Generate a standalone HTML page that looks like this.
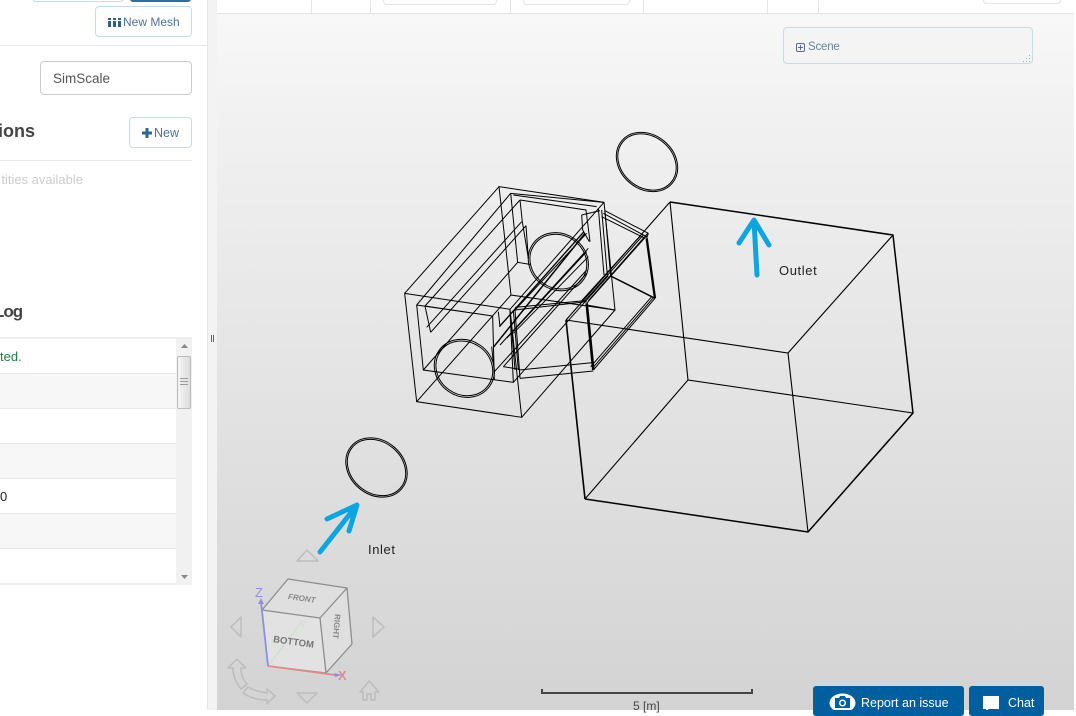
<!DOCTYPE html>
<html><head><meta charset="utf-8"><style>
html,body{margin:0;padding:0}
body{width:1076px;height:710px;overflow:hidden;position:relative;background:#fff;font-family:"Liberation Sans",sans-serif}
.a{position:absolute;box-sizing:border-box}
.btn{border:1px solid #c5dde8;border-radius:4px;color:#4f7399;font-size:13px;background:#fff;white-space:nowrap}
.t{position:absolute;white-space:nowrap}
</style></head><body>
<div class="a" style="left:217px;top:14px;width:857px;height:696px;background:linear-gradient(#f8f8f8,#f1f1f1 15%,#d3d3d3 100%)"></div>
<div class="a" style="left:207px;top:0;width:10px;height:710px;background:#f3f3f3;border-left:1px solid #e6e6e6"></div>
<div class="a" style="left:217px;top:13px;width:857px;height:1px;background:#e4e4e4"></div>
<div class="a" style="left:311px;top:0;width:1px;height:13px;background:#e4e4e4"></div>
<div class="a" style="left:370px;top:0;width:1px;height:13px;background:#e4e4e4"></div>
<div class="a" style="left:510px;top:0;width:1px;height:13px;background:#e4e4e4"></div>
<div class="a" style="left:643px;top:0;width:1px;height:13px;background:#e4e4e4"></div>
<div class="a" style="left:767px;top:0;width:1px;height:13px;background:#e4e4e4"></div>
<div class="a" style="left:818px;top:0;width:1px;height:13px;background:#e4e4e4"></div>
<div class="a" style="left:383px;top:-10px;width:114px;height:15px;border:1px solid #e4e4e4;border-radius:4px"></div>
<div class="a" style="left:523px;top:-10px;width:107px;height:15px;border:1px solid #e4e4e4;border-radius:4px"></div>
<div class="a" style="left:983px;top:-10px;width:78px;height:14px;border:1px solid #e4e4e4;border-radius:4px"></div>
<div class="a" style="left:211px;top:335px;width:1px;height:7px;background:#666"></div>
<div class="a" style="left:213px;top:335px;width:1px;height:7px;background:#666"></div>

<div class="a" style="left:32px;top:-10px;width:92px;height:12px;border:1px solid #c5dde8;border-radius:4px"></div>
<div class="a" style="left:130px;top:-10px;width:61px;height:12px;background:#2f6ea5;border-radius:3px"></div>
<div class="a btn" style="left:95px;top:6px;width:97px;height:31px"></div>
<svg class="a" style="left:108px;top:18px" width="13" height="9"><path d="M0 0h3v2H0zM5 0h3v2H5zM10 0h3v2h-3zM0 3h3v6H0zM5 3h3v6H5zM10 3h3v6h-3z" fill="#2f5f8f"/></svg>
<div class="t" style="left:123px;top:15px;font-size:12px;color:#4f7399">New Mesh</div>
<div class="a" style="left:0;top:45px;width:207px;height:1px;background:#e8e8e8"></div>
<div class="a" style="left:40px;top:61px;width:152px;height:34px;border:1px solid #ccc;border-radius:4px"></div>
<div class="t" style="left:53px;top:71px;font-size:13.500px;color:#555">SimScale</div>
<div class="t" style="left:-19px;top:121px;font-size:18px;font-weight:bold;color:#444;width:54px;text-align:right;direction:rtl">tions</div>
<div class="a btn" style="left:129px;top:117px;width:63px;height:31px"></div>
<svg class="a" style="left:142px;top:128px" width="10" height="10"><path d="M3.500 0h3v3.500H10v3H6.500V10h-3V6.500H0v-3h3.500z" fill="#2f6695"/></svg>
<div class="t" style="left:154px;top:126px;font-size:12.500px;color:#4f7399">New</div>
<div class="a" style="left:0;top:160px;width:192px;height:1px;background:#e8e8e8"></div>
<div class="t" style="left:0;top:172px;font-size:13px;color:#ccc;width:83px;overflow:hidden;direction:rtl">tities available</div>
<div class="t" style="left:-6px;top:302px;font-size:17px;font-weight:bold;letter-spacing:-1px;color:#444">Log</div>

<div class="a" style="left:0;top:337px;width:192px;height:248px;background:#fff;border-top:2px solid #eee;border-bottom:2px solid #eee"></div>
<div class="a" style="left:0;top:373px;width:176px;height:36px;background:#f8f7f7;border-top:1px solid #e9e9e9;border-bottom:1px solid #e9e9e9"></div>
<div class="a" style="left:0;top:443px;width:176px;height:36px;background:#f8f7f7;border-top:1px solid #e9e9e9;border-bottom:1px solid #e9e9e9"></div>
<div class="a" style="left:0;top:513px;width:176px;height:36px;background:#f8f7f7;border-top:1px solid #e9e9e9;border-bottom:1px solid #e9e9e9"></div>
<div class="t" style="left:0;top:349px;font-size:13px;color:#1e7f3c">ted.</div>
<div class="t" style="left:0;top:489px;font-size:13px;color:#222">0</div>
<div class="a" style="left:176px;top:339px;width:16px;height:246px;background:#f1f1f1"></div>
<div class="a" style="left:177px;top:356px;width:14px;height:53px;background:linear-gradient(90deg,#f4f4f4,#ddd);border:1px solid #bbb;border-radius:2px"></div>
<div class="a" style="left:180px;top:378px;width:8px;height:8px;background:repeating-linear-gradient(#999 0 1px,transparent 1px 3px)"></div>
<svg class="a" style="left:176px;top:340px" width="16" height="245"><path d="M5 8h7L8.500 4zM5 235h7l-3.500 4z" fill="#888"/></svg>

<div class="a" style="left:783px;top:27px;width:250px;height:37px;background:#f4f4f4;border:1px solid #c5dde8;border-radius:4px"></div>
<svg class="a" style="left:796px;top:43px" width="9" height="9"><rect x=".5" y=".5" width="8" height="8" rx="1.500" fill="none" stroke="#55689a"/><path d="M2 4.500h5M4.500 2v5" stroke="#55689a"/></svg>
<div class="t" style="left:808px;top:41px;font-size:11.500px;letter-spacing:-.2px;color:#66859f">Scene</div>
<svg class="a" style="left:1022px;top:54px" width="9" height="8"><path d="M7 1h1v1H7zM4 4h1v1H4zM7 4h1v1H7zM1 7h1v1H1zM4 7h1v1H4zM7 7h1v1H7z" fill="#aaa"/></svg>

<svg class="a" style="left:0;top:0" width="1076" height="710" fill="none">
<g stroke="#000" stroke-width="1">
<path d="M670 202L566 320M893 235L788 353L566 320M788 353L808 532M670 202L688 380L913 413M688 380L585 499" stroke-width="1.100"/>
<path d="M670 202L893 235L913 413L808 532L585 499" stroke-width="1.500"/>
<path d="M566 320L585 499" stroke-width="1.600"/>
<g transform="translate(400 170) scale(.33333)" stroke-width="3">
<path d="M14 370L330 418L365 742L50 695ZM297 50L612 97L645 420L333 375ZM14 370L297 50M330 418L612 97M365 742L645 420M50 695L333 375"/>
<path d="M50 405L70 600L340 637L330 420M50 405L278 438M75 408L92 487M75 408L278 438M50 405L332 70M75 408L360 90"/>
<path d="M332 70L353 277L390 283M332 70L612 97M360 90L558 120L570 215M360 90L367 155L385 265M340 75L590 110"/>
<path d="M80 472L365 155M92 487L378 167M70 600L353 277M378 167L385 265"/>
<path d="M340 637L625 317M283 605L560 300M310 590L560 310"/>
<path d="M545 135L600 122M545 135L548 180L568 215M595 115L612 315M605 120L622 315M615 125L632 318"/>
<path d="M615 122L745 190M610 130L740 200M605 140L735 205M745 190L740 205"/>
<path d="M740 205L765 385" stroke-width="7"/>
<path d="M632 318L765 385" stroke-width="4.500"/>
<path d="M765 385L580 600M760 383L577 595M755 380L572 590"/>
<path d="M560 400L580 600" stroke-width="8"/>
<path d="M560 400L740 197M565 392L743 190M552 395L730 195M545 392L722 197"/>
<path d="M345 420L560 395M345 412L555 392M360 625L580 603M358 600L578 578M310 590L360 598M345 420L360 625"/>
<path d="M278 438L283 630M295 425L300 470M330 420L345 600M340 420L355 600M275 530L283 605"/>
<path d="M280 532L555 190" stroke-width="4.500"/>
<path d="M298 470L552 185" stroke-width="4"/>
<path d="M300 525L565 235M320 505L560 245M340 490L565 260M345 420L560 190"/>
<path d="M560 405L645 420"/>
<g transform="rotate(35 475 275)"><ellipse cx="475" cy="275" rx="93" ry="84"/><ellipse cx="475" cy="275" rx="88" ry="79"/></g>
<g transform="rotate(35 193 595)"><ellipse cx="193" cy="595" rx="93" ry="84"/><ellipse cx="193" cy="595" rx="88" ry="79"/></g>
</g>
<g transform="rotate(40 647 162)"><ellipse cx="647" cy="162" rx="33" ry="27"/><ellipse cx="647" cy="162" rx="31.500" ry="25.500"/></g>
<g transform="rotate(40 376.500 467.500)"><ellipse cx="376.500" cy="467.500" rx="33" ry="27"/><ellipse cx="376.500" cy="467.500" rx="31.500" ry="25.500"/></g>
</g>
<g stroke="#0ba5e2" stroke-width="5" stroke-linecap="round" stroke-linejoin="round">
<path d="M757 275L754 221M739 243L754 220L769 245"/>
<path d="M320 552L357 505M327 519L357 505L349 531"/>
</g>
<path d="M288 579L347 588L352 644L326 673L268 666L262 610Z" fill="#dfdfdf"/>
<path d="M262 610L320 618L326 673L268 666Z" fill="#e2e2e2"/>
<path d="M288 579L347 588L352 644L326 673L268 666L262 610ZM262 610L320 618L347 588M320 618L326 673" stroke="#8d8d8d" stroke-width="1.300" stroke-linejoin="round"/>
<path d="M268 666L303 620" stroke="#cfe0cf" stroke-width="1.300"/>
<path d="M268 666L261 602" stroke="#8f8fe0" stroke-width="1.800"/>
<path d="M268 666L335 675" stroke="#e08a8a" stroke-width="1.800"/>
<path d="M258 604L261 598L264 604ZM334 673L335 677L342 675Z" fill="#8f8fe0"/>
<g stroke="#bdbdbd" stroke-width="1.500" stroke-linejoin="round">
<path d="M297 561L307 550L318 561Z"/>
<path d="M241 617L231 627L241 637Z"/>
<path d="M373 617L384 627L373 637Z"/>
<path d="M297 693L317 693L307 703Z"/>
<path d="M360 692L369 681L379 692H375V700H371V694H367V700H363V692Z"/>
<path d="M237 659L228 668L233 668C233 676 236 683 241 689L247 684C243 680 241 674 241 668L246 668Z"/>
<path d="M243 693L248 687C253 690 260 692 267 693L267 689L275 696L267 704L267 700C258 700 250 698 243 693Z"/>
</g>
<path d="M542 689V693H752V689" stroke="#444" stroke-width="2"/>
</svg>

<div class="t" style="left:779px;top:263px;font-size:13px;color:#222;letter-spacing:.6px">Outlet</div>
<div class="t" style="left:368px;top:542px;font-size:13px;color:#222;letter-spacing:.6px">Inlet</div>
<div class="t" style="left:273px;top:637px;font-size:9.500px;font-weight:bold;color:#777;transform:rotate(8deg)">BOTTOM</div>
<div class="t" style="left:288px;top:594px;font-size:8px;font-weight:bold;font-style:italic;color:#888;transform:rotate(8deg)">FRONT</div>
<div class="t" style="left:324px;top:622px;font-size:8px;font-weight:bold;color:#888;transform:rotate(95deg)">RIGHT</div>
<div class="t" style="left:255px;top:585px;font-size:13px;color:#8f8fe0">Z</div>
<div class="t" style="left:338px;top:668px;font-size:13px;font-weight:bold;color:#e08a8a">X</div>
<div class="t" style="left:299px;top:619px;font-size:11px;color:#cfe0cf">Y</div>
<div class="t" style="left:633px;top:699px;font-size:12px;color:#444">5 [m]</div>

<div class="a" style="left:813px;top:686px;width:151px;height:30px;background:#005f9e;border-radius:3px"></div>
<div class="a" style="left:969px;top:686px;width:75px;height:30px;background:#005f9e;border-radius:3px"></div>
<svg class="a" style="left:829px;top:693px" width="27" height="17"><ellipse cx="13.500" cy="10" rx="13" ry="9.500" fill="#fff"/><path d="M6 5h4l1-2h5l1 2h4v10H6z" fill="#005f9e"/><circle cx="13.500" cy="10" r="3.500" fill="#fff"/><circle cx="13.500" cy="10" r="2" fill="#005f9e"/></svg>
<svg class="a" style="left:983px;top:695px" width="17" height="15"><path d="M0 1h16v13H6l-3 2v-2H0z" fill="#fff"/></svg>
<div class="t" style="left:861px;top:696px;font-size:12.500px;color:#fff">Report an issue</div>
<div class="t" style="left:1008px;top:696px;font-size:12.500px;color:#fff">Chat</div>
</body></html>
